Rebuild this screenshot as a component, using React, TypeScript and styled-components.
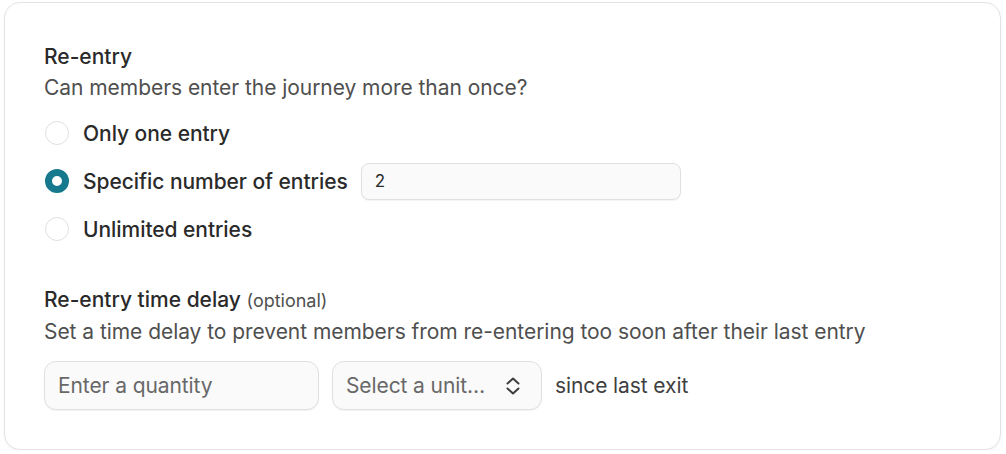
import React from 'react';
import styled, { createGlobalStyle } from 'styled-components';

const GlobalStyle = createGlobalStyle`
  html, body {
    margin: 0;
    padding: 0;
    background: #ffffff;
  }
  body {
    font-family: Inter, "Noto Sans", sans-serif;
    color: #2b2b2b;
  }
  * { box-sizing: border-box; }
`;

const Page = styled.div`
  padding: 2px 5px 0 4px;
`;

const Card = styled.section`
  height: 448px;
  border: 1px solid #e3e3e3;
  border-radius: 16px;
  box-shadow: 0 1px 2px rgb(0 0 0 / 6%);
  padding: 39px 39px 0 39px;
  display: flex;
  flex-direction: column;
`;

const Group = styled.div<{ $gap?: number }>`
  display: flex;
  flex-direction: column;
  margin-top: ${p => p.$gap ?? 0}px;
`;

const Title = styled.div`
  font-size: 21px;
  line-height: 30px;
  font-weight: 450;
  color: #2a2a2a;
`;

const Optional = styled.span`
  font-size: 18px;
  font-weight: 400;
  color: #505050;
`;

const Hint = styled.div`
  font-size: 21px;
  line-height: 30px;
  margin-top: 1px;
  color: #4f4f4f;
  letter-spacing: -0.05px;
`;

const Options = styled.div`
  display: flex;
  flex-direction: column;
  gap: 12px;
  margin-top: 12px;
`;

const OptionRow = styled.label`
  display: flex;
  align-items: center;
  height: 36px;
  gap: 13px;
  cursor: pointer;
`;

const Radio = styled.span<{ $checked?: boolean }>`
  flex: 0 0 24px;
  width: 24px;
  height: 24px;
  margin-left: 1px;
  margin-right: 1px;
  border-radius: 50%;
  border: ${p => (p.$checked ? '7px solid #17798d' : '1.5px solid #e0e0e0')};
  background: #ffffff;
`;

const OptionLabel = styled.span`
  font-size: 21px;
  font-weight: 450;
  color: #2a2a2a;
  letter-spacing: -0.05px;
`;

const Field = styled.div<{ $width: number; $height: number }>`
  width: ${p => p.$width}px;
  height: ${p => p.$height}px;
  border: 1px solid #e0e0e0;
  border-radius: ${p => (p.$height > 40 ? 12 : 8)}px;
  background: #fafafa;
  box-shadow: 0 1px 1px rgb(0 0 0 / 5%);
  display: flex;
  align-items: center;
  justify-content: space-between;
  padding: 0 13px;
`;

const FieldText = styled.span<{ $placeholder?: boolean }>`
  font-size: ${p => (p.$placeholder ? 21 : 17)}px;
  color: ${p => (p.$placeholder ? '#686868' : '#2a2a2a')};
  letter-spacing: ${p => (p.$placeholder ? '-0.1px' : '0')};
`;

const DelayRow = styled.div`
  display: flex;
  align-items: center;
  gap: 13px;
  margin-top: 14px;
`;

const Suffix = styled.span`
  font-size: 21px;
  color: #3f3f3f;
  letter-spacing: -0.1px;
`;

const ChevronSvg = styled.svg`
  flex: 0 0 16px;
  margin-right: 7px;
  color: #3d3d3d;
`;

const Chevrons = () => (
  <ChevronSvg width="16" height="20" viewBox="0 0 16 20" fill="none" stroke="currentColor" strokeWidth="2" strokeLinecap="round" strokeLinejoin="round">
    <path d="M2.5 7.5 L8 2.5 L13.5 7.5" />
    <path d="M2.5 12.5 L8 17.5 L13.5 12.5" />
  </ChevronSvg>
);

const options = [
  { label: 'Only one entry', checked: false },
  { label: 'Specific number of entries', checked: true, value: '2' },
  { label: 'Unlimited entries', checked: false },
];

export default function App() {
  return (
    <Page>
      <GlobalStyle />
      <Card>
        <Group>
          <Title>Re-entry</Title>
          <Hint>Can members enter the journey more than once?</Hint>
          <Options>
            {options.map(o => (
              <OptionRow key={o.label}>
                <Radio $checked={o.checked} />
                <OptionLabel>{o.label}</OptionLabel>
                {o.value && (
                  <Field $width={320} $height={37}>
                    <FieldText>{o.value}</FieldText>
                  </Field>
                )}
              </OptionRow>
            ))}
          </Options>
        </Group>
        <Group $gap={38}>
          <Title>
            Re-entry time delay <Optional>(optional)</Optional>
          </Title>
          <Hint>Set a time delay to prevent members from re-entering too soon after their last entry</Hint>
          <DelayRow>
            <Field $width={275} $height={49}>
              <FieldText $placeholder>Enter a quantity</FieldText>
            </Field>
            <Field $width={210} $height={49}>
              <FieldText $placeholder>Select a unit…</FieldText>
              <Chevrons />
            </Field>
            <Suffix>since last exit</Suffix>
          </DelayRow>
        </Group>
      </Card>
    </Page>
  );
}
